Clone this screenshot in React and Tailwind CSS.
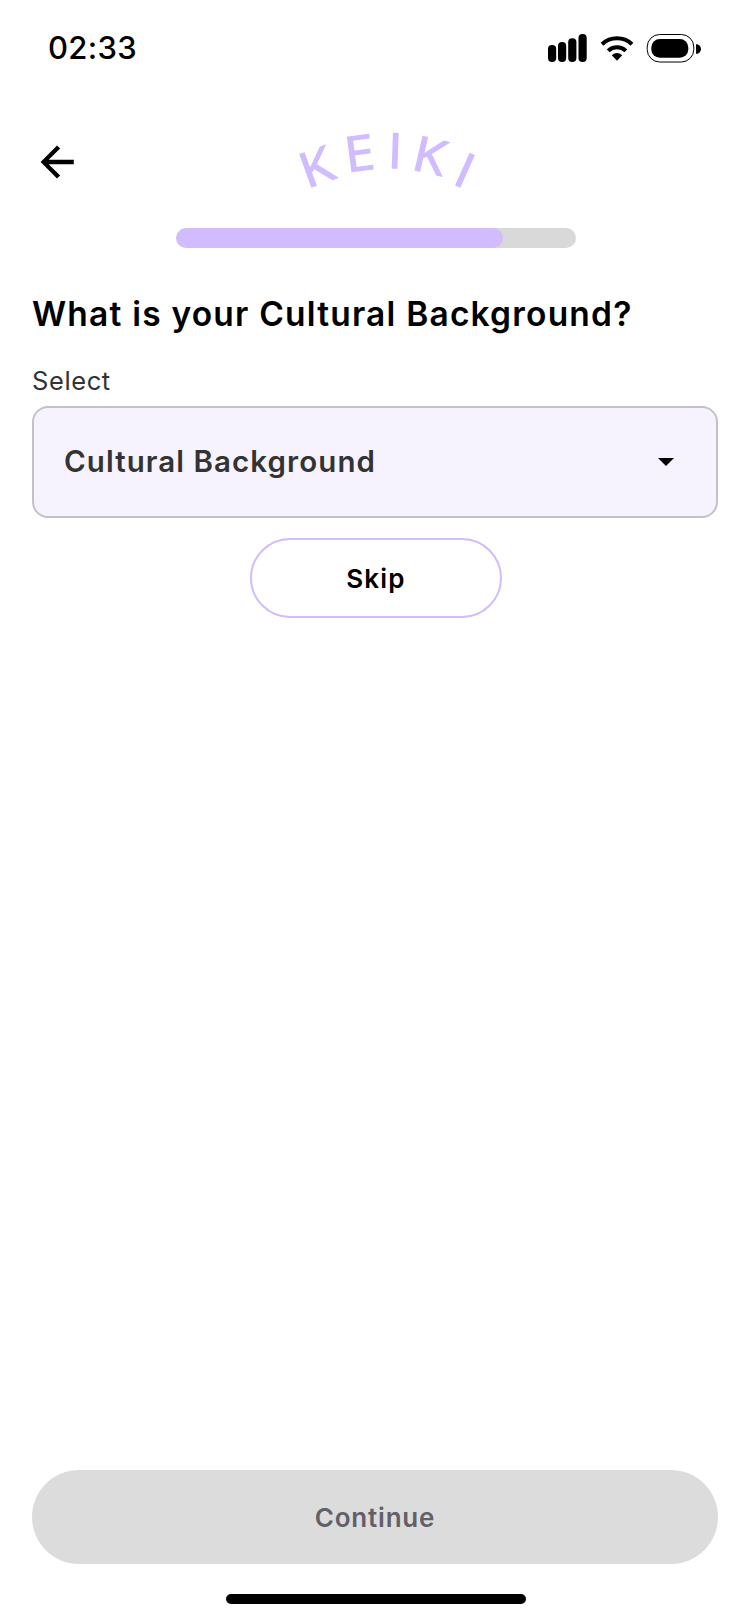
const LETTERS = [
  { ch: 'K', x: 34.3, y: 76, r: -20 },
  { ch: 'E', x: 74.7, y: 61.3, r: -7.5 },
  { ch: 'I', x: 115, y: 58, r: 2 },
  { ch: 'K', x: 138, y: 60.8, r: 13 },
  { ch: 'I', x: 178.3, y: 76.2, r: 24 },
];

function StatusBar() {
  return (
    <header className="flex h-24 items-center justify-between pl-12 pr-[49px]">
      <time className="pb-0.5 text-[31px] leading-none font-medium tracking-[0.3px]">02:33</time>
      <svg className="h-[30px] w-[153px]" viewBox="548 33 153 30" aria-hidden="true">
        <rect x="548" y="45" width="8.2" height="17" rx="4" />
        <rect x="558" y="42" width="8.2" height="20" rx="4" />
        <rect x="568.2" y="38.2" width="8.2" height="23.8" rx="4" />
        <rect x="578.5" y="34" width="8.2" height="28" rx="4" />
        <g fill="none" stroke="#000" strokeWidth="4">
          <path d="M602 44.2A22 22 0 0 1 632 44.2" />
          <path d="M608.2 50.8A12.5 12.5 0 0 1 625.8 50.8" />
        </g>
        <path d="M611.8 55.2Q617 50.7 622.2 55.2L617 60.8Z" />
        <rect x="647.2" y="34.5" width="46.6" height="27.5" rx="12.5" fill="none" stroke="#000" />
        <rect x="651.3" y="39" width="37" height="18.8" rx="8.5" />
        <path d="M696 44.2C702.6 44.2 702.6 53.8 696 53.8Z" />
      </svg>
    </header>
  );
}

function Logo() {
  return (
    <svg className="h-[132px] w-[220px]" viewBox="0 -14 220 132" role="img" aria-label="Keiki">
      {LETTERS.map((l, i) => (
        <text
          key={i}
          x="-7.2"
          y="0"
          transform={`translate(${l.x} ${l.y}) rotate(${l.r}) scale(1.09 1)`}
          className="fill-[#d0bcff] stroke-[#d0bcff] stroke-[1.2px] font-['Open_Sans',sans-serif] text-[48.5px]"
        >
          {l.ch}
        </text>
      ))}
    </svg>
  );
}

export default function App() {
  return (
    <div className="flex h-[1624px] w-[750px] flex-col bg-white font-[Inter,sans-serif] text-black">
      <StatusBar />
      <nav className="flex h-[132px] items-start pl-[33px]">
        <button className="mt-[42px]" aria-label="Back">
          <svg className="size-12" viewBox="0 0 24 24">
            <path d="M20.4 10.9H7.83l5.75-5.6L12 3.8l-8.2 8.2 8.2 8.2 1.58-1.5L7.83 13.1H20.4z" />
          </svg>
        </button>
        <div className="ml-[199px]">
          <Logo />
        </div>
      </nav>
      <div className="ml-44 h-5 w-[400px] shrink-0 overflow-hidden rounded-full bg-[#d9d9d9]">
        <div className="h-full w-[327px] rounded-full bg-[#d0bcff]" />
      </div>
      <main className="flex grow flex-col px-8">
        <h1 className="mt-[42px] h-12 text-[33.5px] leading-[48px] font-semibold tracking-[1.2px] whitespace-nowrap">
          What is your Cultural Background?
        </h1>
        <label className="mt-[27px] h-8 text-[25.5px] leading-8 tracking-[0.6px] text-[#333]">Select</label>
        <button className="mt-[9px] flex h-28 items-center justify-between rounded-2xl border-2 border-[#c4c1ca] bg-[#f6f3ff] pr-[42px] pl-[30px] text-[29.5px] font-semibold tracking-[1.07px] text-[#333]">
          <span className="pb-0.5 whitespace-nowrap">Cultural Background</span>
          <svg className="h-2 w-4" viewBox="0 0 16 8">
            <path d="M0 0H16L8 8Z" fill="#000" />
          </svg>
        </button>
        <button className="mt-5 ml-[218px] h-20 w-[252px] rounded-full border-2 border-[#d0bcff] text-[26px] font-semibold tracking-[1.2px]">
          Skip
        </button>
        <button className="mt-auto h-[94px] rounded-full bg-[#dcdcdc] text-[26px] font-semibold tracking-[0.8px] text-[#625f69]">
          Continue
        </button>
      </main>
      <div className="mt-[30px] mb-5 ml-[226px] h-2.5 w-[300px] shrink-0 rounded-full bg-black" />
    </div>
  );
}
